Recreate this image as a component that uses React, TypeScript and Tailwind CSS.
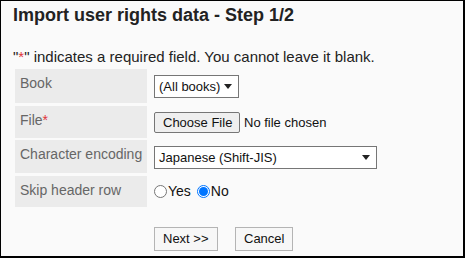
import React from "react";

function SelectBox({ text, width }: { text: string; width: string }) {
  return (
    <div
      className={`${width} h-[23px] border border-[#767676] bg-white flex items-center pl-[4px] pr-[6px] text-[13px] leading-[21px] text-[#111]`}
    >
      <span className="flex-1 whitespace-nowrap">{text}</span>
      <svg width="8" height="5" viewBox="0 0 8 5" className="shrink-0">
        <path d="M0 0 H8 L4 5 Z" fill="#222" />
      </svg>
    </div>
  );
}

function Radio({ checked }: { checked: boolean }) {
  return checked ? (
    <span className="w-[13px] h-[13px] rounded-full border border-[#0075ff] bg-white flex items-center justify-center">
      <span className="w-[9px] h-[9px] rounded-full bg-[#0075ff]" />
    </span>
  ) : (
    <span className="w-[13px] h-[13px] rounded-full border border-[#767676] bg-white" />
  );
}

export default function App() {
  return (
    <div className="w-[465px] h-[258px] bg-[#fafafa] border-l border-t border-r-2 border-b-2 border-black font-['Liberation_Sans',Arial,sans-serif] text-[#222] overflow-hidden">
      <h1 className="pt-[4px] pl-[12px] text-[18px] leading-[21px] font-bold text-[#222]">
        Import user rights data - Step 1/2
      </h1>
      <p className="mt-[22px] pl-[12px] text-[15px] leading-[17px] text-[#222] whitespace-nowrap">
        "<span className="text-[#e0343b]">*</span>" indicates a required field. You cannot leave it blank.
      </p>
      <div className="mt-[4px] pl-[14px] flex flex-col text-[14px] leading-[16px]">
        <div className="flex h-[34px]">
          <div className="w-[132px] bg-[#ebebeb] pl-[5px] pt-[6px] text-[#666]">Book</div>
          <div className="pl-[7px] pt-[6px]">
            <SelectBox text="(All books)" width="w-[85px]" />
          </div>
        </div>
        <div className="flex h-[32px] mt-[3px]">
          <div className="w-[132px] bg-[#ebebeb] pl-[5px] pt-[6px] text-[#666]">
            File<span className="text-[#e0343b]">*</span>
          </div>
          <div className="pl-[7px] pt-[6px] flex items-start">
            <div className="h-[21px] w-[86px] border border-[#767676] bg-[#efefef] rounded-[2px] pl-[8px] text-[13px] leading-[19px] text-[#111] whitespace-nowrap">
              Choose File
            </div>
            <span className="ml-[4px] text-[13px] leading-[21px] text-[#111] whitespace-nowrap">No file chosen</span>
          </div>
        </div>
        <div className="flex h-[33px] mt-[2px]">
          <div className="w-[132px] bg-[#ebebeb] pl-[5px] pt-[6px] text-[#666]">Character encoding</div>
          <div className="pl-[7px] pt-[6px]">
            <SelectBox text="Japanese (Shift-JIS)" width="w-[223px]" />
          </div>
        </div>
        <div className="flex h-[31px] mt-[3px]">
          <div className="w-[132px] bg-[#ebebeb] pl-[5px] pt-[6px] text-[#666]">Skip header row</div>
          <div className="pl-[7px] pt-[7px] self-start">
            <div className="flex items-center h-[16px] text-[#111]">
              <Radio checked={false} />
              <span className="ml-[1px]">Yes</span>
              <span className="ml-[6px]"><Radio checked={true} /></span>
              <span className="ml-[1px]">No</span>
            </div>
          </div>
        </div>
      </div>
      <div className="mt-[20px] pl-[153px] flex gap-[17px] text-[13px] leading-[22px] text-[#111]">
        <div className="w-[64px] h-[24px] border border-[#b4b4b4] bg-[#f7f7f7] pl-[8px]">Next &gt;&gt;</div>
        <div className="w-[58px] h-[24px] border border-[#b4b4b4] bg-[#f7f7f7] pl-[8px]">Cancel</div>
      </div>
    </div>
  );
}
